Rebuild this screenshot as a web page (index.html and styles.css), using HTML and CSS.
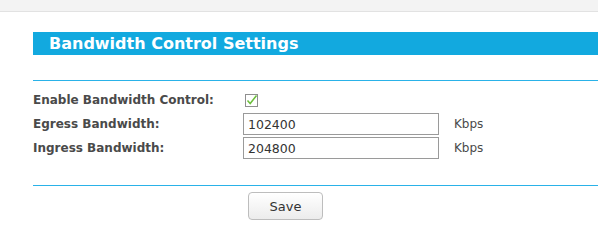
FILE: index.html
```html
<!DOCTYPE html>
<html lang="en">
<head>
<meta charset="UTF-8">
<title>Bandwidth Control</title>
<link rel="stylesheet" href="styles.css">
</head>
<body>

<div class="top-bar"></div>

<div class="content">
    <h1 class="title">Bandwidth Control Settings</h1>
    <hr class="line line-top">

    <div class="form">
        <div class="row">
            <label class="label">Enable Bandwidth Control:</label>
            <span class="check">
                <svg width="13" height="13" viewBox="0 0 13 13">
                    <rect x="0.5" y="0.5" width="12" height="12" fill="#fff" stroke="#8f8f8f"/>
                    <path d="M2.5 6.5 L5.2 9.5 L11.5 1.5" fill="none" stroke="#6bbf3a" stroke-width="1.5"/>
                </svg>
            </span>
        </div>
        <div class="row">
            <label class="label">Egress Bandwidth:</label>
            <input type="text" class="field" value="102400">
            <span class="unit">Kbps</span>
        </div>
        <div class="row">
            <label class="label">Ingress Bandwidth:</label>
            <input type="text" class="field" value="204800">
            <span class="unit">Kbps</span>
        </div>
    </div>

    <hr class="line">

    <div class="actions">
        <button class="btn">Save</button>
    </div>
</div>

</body>
</html>
```

FILE: styles.css
```css
body {
    margin: 0;
    font-family: "DejaVu Sans", Verdana, sans-serif;
    background: #fff;
    color: #4a4a4a;
}
.top-bar {
    height: 11px;
    background: #f3f3f3;
    border-bottom: 1px solid #e2e2e2;
}
.content {
    padding-left: 33px;
}
.title {
    margin: 20px 0 0;
    height: 23px;
    line-height: 23px;
    padding-left: 16px;
    background: #12a9df;
    color: #fff;
    font-size: 16px;
    font-weight: bold;
}
.line {
    margin: 0;
    border: none;
    border-top: 1px solid #2ab2e8;
}
.line-top {
    margin-top: 25px;
}
.form {
    padding-top: 7px;
    padding-bottom: 25px;
}
.row {
    display: flex;
    align-items: center;
    height: 24px;
}
.label {
    width: 210px;
    font-size: 12px;
    font-weight: bold;
    color: #4a4a4a;
}
.check {
    display: flex;
    margin-left: 2px;
}
.field {
    box-sizing: border-box;
    width: 196px;
    height: 22px;
    margin: 0;
    padding: 0 4px;
    border: 1px solid #9a9a9a;
    font-family: "DejaVu Sans", Verdana, sans-serif;
    font-size: 12.5px;
    color: #333;
}
.unit {
    margin-left: 15px;
    font-size: 12px;
    color: #4a4a4a;
}
.actions {
    padding-left: 215px;
    padding-top: 6px;
}
.btn {
    width: 75px;
    height: 28px;
    border: 1px solid #bdbdbd;
    border-radius: 4px;
    background: linear-gradient(#ffffff, #ececec);
    font-family: "DejaVu Sans", Verdana, sans-serif;
    font-size: 13px;
    color: #333;
}
```
